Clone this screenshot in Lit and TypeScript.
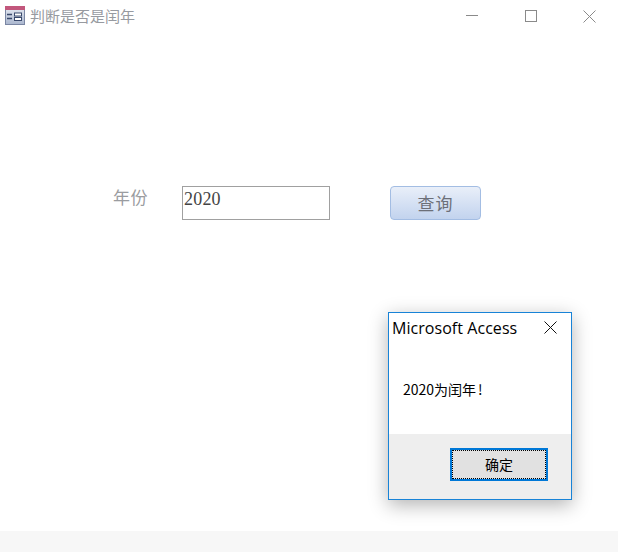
import { LitElement, html, css } from "lit";
import { customElement } from "lit/decorators.js";

@customElement("app-root")
export class AppRoot extends LitElement {
  static styles = css`
    :host {
      display: flex;
      flex-direction: column;
      position: relative;
      width: 618px;
      height: 552px;
      background: #fff;
      overflow: hidden;
      font-family: "Noto Sans CJK SC", sans-serif;
    }
    .titlebar {
      display: flex;
      align-items: flex-start;
      height: 34px;
      flex: none;
    }
    .app-icon {
      display: block;
      margin: 6px 5px 0 5px;
      flex: none;
    }
    .title {
      font-size: 15px;
      line-height: 20px;
      margin-top: 6px;
      color: #979aa0;
      flex: 1;
    }
    .winbtns {
      display: flex;
      margin-right: -1px;
    }
    .winbtn {
      width: 59px;
      height: 32px;
      display: flex;
      align-items: center;
      justify-content: center;
    }
    .form {
      flex: 1;
      display: flex;
      align-items: flex-start;
      padding: 152px 0 0 113px;
    }
    .label {
      width: 69px;
      font-size: 17px;
      line-height: 22px;
      color: #9a9ca0;
      letter-spacing: 0.5px;
    }
    .input {
      box-sizing: border-box;
      width: 148px;
      height: 34px;
      border: 1px solid #a0a0a0;
      padding: 1px 0 0 1px;
      font-family: "Liberation Serif", serif;
      font-size: 18px;
      line-height: 22px;
      letter-spacing: 0.2px;
      color: #444;
    }
    .query {
      box-sizing: border-box;
      margin-left: 60px;
      width: 91px;
      height: 34px;
      border: 1px solid #a3bde3;
      border-radius: 4px;
      background: linear-gradient(#e9eff9, #c2d3ee);
      display: flex;
      align-items: center;
      justify-content: center;
      font-size: 17px;
      line-height: 24px;
      color: #6c6f78;
      letter-spacing: 1px;
    }
    .footer {
      height: 21px;
      flex: none;
      background: #f7f7f7;
    }
    .dialog {
      position: absolute;
      left: 388px;
      top: 312px;
      box-sizing: border-box;
      width: 184px;
      height: 188px;
      border: 1px solid #1883d7;
      background: #fff;
      box-shadow: 0 5px 18px rgba(0, 0, 0, 0.3);
      display: flex;
      flex-direction: column;
    }
    .d-head {
      display: flex;
      align-items: center;
      justify-content: space-between;
      height: 29px;
      padding: 0 14px 0 3px;
      flex: none;
    }
    .d-title {
      font-family: "Open Sans", "Noto Sans", sans-serif;
      font-size: 16px;
      line-height: 20px;
      color: #000;
      letter-spacing: 0.05px;
    }
    .d-body {
      flex: 1;
      padding: 37px 0 0 14px;
      font-size: 14px;
      line-height: 20px;
      color: #000;
    }
    .bang {
      margin-left: 2px;
    }
    .d-foot {
      height: 65px;
      flex: none;
      background: #eeeeee;
      display: flex;
      justify-content: flex-end;
      padding: 14px 23px 0 0;
      box-sizing: border-box;
    }
    .ok {
      box-sizing: border-box;
      width: 98px;
      height: 33px;
      border: 2px solid #0078d7;
      background: #e1e1e1;
      display: flex;
      align-items: center;
      justify-content: center;
      padding-bottom: 2px;
      font-size: 14px;
      line-height: 20px;
      color: #000;
      outline: 1px dotted #000;
      outline-offset: -3px;
    }
  `;

  render() {
    return html`
      <div class="titlebar">
        <svg class="app-icon" width="20" height="19" viewBox="0 0 20 19">
          <defs>
            <linearGradient id="ig" x1="0" y1="0" x2="0" y2="1">
              <stop offset="0" stop-color="#e8ecf4" />
              <stop offset="1" stop-color="#aab6ce" />
            </linearGradient>
          </defs>
          <rect x="0.5" y="0.5" width="19" height="18" fill="url(#ig)" stroke="#7a86a3" />
          <rect x="0" y="0" width="20" height="4" fill="#c2577c" />
          <path d="M2 8.5h5M2 12.5h5" stroke="#39486b" fill="none" stroke-width="1.4" />
          <rect x="9.5" y="7" width="7" height="3" fill="#fff" stroke="#39486b" />
          <rect x="9.5" y="11.5" width="7" height="3" fill="#fff" stroke="#39486b" />
        </svg>
        <div class="title">判断是否是闰年</div>
        <div class="winbtns">
          <div class="winbtn">
            <svg width="12" height="12" viewBox="0 0 12 12"><path d="M0 5.5h12" stroke="#8a8a8a" fill="none" /></svg>
          </div>
          <div class="winbtn">
            <svg width="12" height="12" viewBox="0 0 12 12"><rect x="0.5" y="0.5" width="11" height="11" stroke="#8a8a8a" fill="none" /></svg>
          </div>
          <div class="winbtn">
            <svg width="13" height="13" viewBox="0 0 13 13"><path d="M0.5 0.5l12 12M12.5 0.5l-12 12" stroke="#8a8a8a" fill="none" /></svg>
          </div>
        </div>
      </div>
      <div class="form">
        <div class="label">年份</div>
        <div class="input">2020</div>
        <div class="query">查询</div>
      </div>
      <div class="footer"></div>
      <div class="dialog">
        <div class="d-head">
          <div class="d-title">Microsoft Access</div>
          <svg width="13" height="13" viewBox="0 0 13 13"><path d="M0.5 0.5l12 12M12.5 0.5l-12 12" stroke="#111" fill="none" /></svg>
        </div>
        <div class="d-body">2020为闰年<span class="bang">!</span></div>
        <div class="d-foot"><div class="ok">确定</div></div>
      </div>
    `;
  }
}
